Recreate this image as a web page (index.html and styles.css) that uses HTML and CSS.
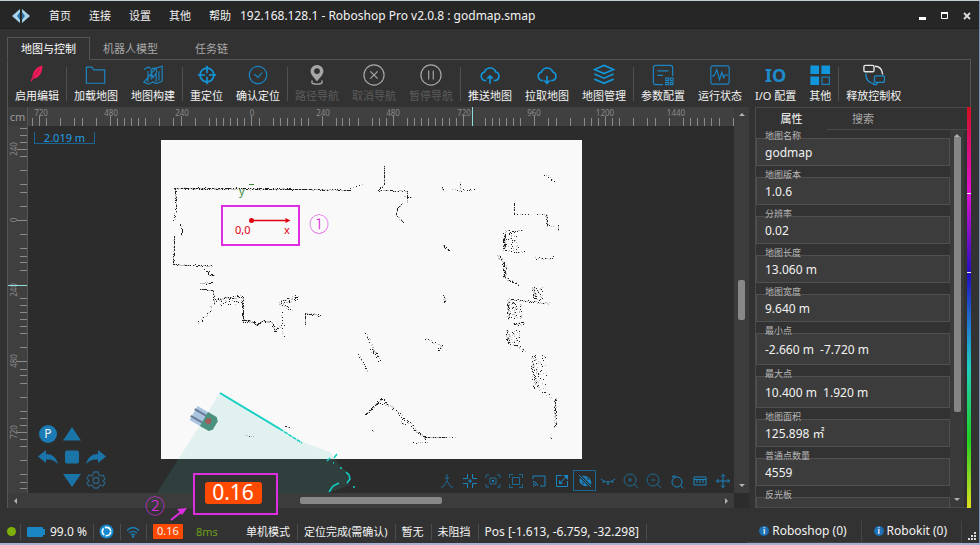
FILE: index.html
```html
<!DOCTYPE html>
<html lang="zh-CN">
<head>
<meta charset="utf-8">
<title>Roboshop Pro</title>
<link rel="stylesheet" href="styles.css">
</head>
<body>
<header class="titlebar">
  <svg class="logo" viewBox="0 0 18 14"><path d="M8 0v14L0 7z" fill="#a9d3ea"/><path d="M10 0v14l8-7z" fill="#a9d3ea"/><path d="M8 3v8L5 7zM10 3v8l3-4z" fill="#2b6f9c"/></svg>
  <nav class="menu">
    <button>首页</button><button>连接</button><button>设置</button><button>其他</button><button>帮助</button>
  </nav>
  <h1 class="title">192.168.128.1 - Roboshop Pro v2.0.8 : godmap.smap</h1>
  <div class="winbtns">
    <button aria-label="Minimize"><svg viewBox="0 0 8 8"><path d="M0 5h7v3H0z" fill="#fff"/></svg></button>
    <button aria-label="Maximize"><svg viewBox="0 0 8 8"><path d="M.5 1.5h6v5h-6z" fill="none" stroke="#fff"/><path d="M0 0h7v2H0z" fill="#fff"/></svg></button>
    <button aria-label="Close"><svg viewBox="0 0 8 8"><path d="M1 1l6 6M7 1L1 7" stroke="#ddd" stroke-width="1.8"/></svg></button>
  </div>
</header>

<main class="main">
  <div class="tabs">
    <button class="tab active">地图与控制</button>
    <button class="tab">机器人模型</button>
    <button class="tab">任务链</button>
  </div>
  <div class="page">
    <div class="toolbar">
      <div class="group">
        <button class="tool"><svg viewBox="0 0 24 24"><path d="M18 1.500C11 3 7.500 8 7 14L5 18.500l1 .5 2-3c6-1 10-6 10-14.500z" fill="#ee1c5c"/><path d="M15 5L7 16" stroke="#a3113f" stroke-width=".8"/></svg>启用编辑</button>
      </div>
      <div class="group">
        <button class="tool"><svg viewBox="0 0 24 24" class="ln"><path d="M1.500 3.500h6l2 3h12v14.500h-20z"/></svg>加载地图</button>
        <button class="tool"><svg viewBox="0 0 24 24" class="ln"><path d="M2 6l4.500-2.500 3 1M15 4.500L22 2.500v16l-6 3-4-2-5 2.500-5-2zM6.500 7.500v12M10 6v11M15.500 11v9M18.500 8v10M10 9c0-6 6-6 6 0l-4 6z"/></svg>地图构建</button>
      </div>
      <div class="group">
        <button class="tool"><svg viewBox="0 0 24 24" class="ln bold"><circle cx="12" cy="12" r="7.500"/><path d="M12 2v8M12 14v8M2 12h8M14 12h8"/></svg>重定位</button>
        <button class="tool"><svg viewBox="0 0 24 24" class="ln"><circle cx="12" cy="12" r="9.500"/><path d="M8 11l4 3.500 4.500-5"/></svg>确认定位</button>
      </div>
      <div class="group">
        <button class="tool" disabled><svg viewBox="0 0 24 24"><path fill-rule="evenodd" d="M12 1a7 7 0 0 1 7 7c0 4-4 7-7 11C9 15 5 12 5 8a7 7 0 0 1 7-7zm0 3.500a3.200 3.200 0 1 0 0 6.400 3.200 3.200 0 0 0 0-6.400z" fill="#a6a6a6"/><path d="M7 18c-2 3 1 4 5 4s7-1 5-4" fill="none" stroke="#a6a6a6" stroke-width="1.500"/></svg>路径导航</button>
        <button class="tool" disabled><svg viewBox="0 0 24 24" class="ln"><circle cx="12" cy="12" r="11"/><path d="M8 8l8 8M16 8l-8 8"/></svg>取消导航</button>
        <button class="tool" disabled><svg viewBox="0 0 24 24" class="ln"><circle cx="12" cy="12" r="11"/><path d="M9.500 7v10M14.500 7v10"/></svg>暂停导航</button>
      </div>
      <div class="group">
        <button class="tool"><svg viewBox="0 0 24 24" class="ln bold"><path d="M8 18H6.500a4.700 4.700 0 0 1-.500-9.200 6.500 6.500 0 0 1 12.300 0A4.700 4.700 0 0 1 17.500 18H16M12 21.500v-8M9 16l3-3 3 3"/></svg>推送地图</button>
        <button class="tool"><svg viewBox="0 0 24 24" class="ln bold"><path d="M8 18H6.500a4.700 4.700 0 0 1-.500-9.200 6.500 6.500 0 0 1 12.300 0A4.700 4.700 0 0 1 17.500 18H16M12 13v8M9 18l3 3 3-3"/></svg>拉取地图</button>
        <button class="tool"><svg viewBox="0 0 24 24" class="ln bold"><path d="M12 1.500l10.500 4.500L12 10.500 1.500 6zM1.500 11L12 15.500 22.500 11M1.500 16.500L12 21l10.500-4.500"/></svg>地图管理</button>
      </div>
      <div class="group">
        <button class="tool"><svg viewBox="0 0 24 24" class="ln"><path d="M12 22.500H4a2.500 2.500 0 0 1-2.500-2.500V4A2.500 2.500 0 0 1 4 1.500h16A2.500 2.500 0 0 1 22.500 4v9M6 7.500h12M6 12.500h6M15 15.500h3v2.500h-3zM20 15.500h3v2.500h-3zM15 20h3v2.500h-3zM20 20h3v2.500h-3z"/></svg>参数配置</button>
        <button class="tool"><svg viewBox="0 0 24 24" class="ln"><rect x="2" y="2" width="20" height="20" rx="2"/><path d="M3 13h2.500L8.500 6l3 11L14 9l2 6 1.500-3H21"/></svg>运行状态</button>
        <button class="tool"><span class="io">IO</span>I/O 配置</button>
        <button class="tool"><svg viewBox="0 0 24 24"><path d="M1.500 1.500H11V11H1.500zM13.500 1.500H23V11h-9.500zM1.500 13.500H11V23H1.500z" fill="#1296db"/><path d="M14.200 14.200h8v8h-8z" fill="none" stroke="#1b7fb5" stroke-width="1.400"/></svg>其他</button>
      </div>
      <div class="group">
        <button class="tool"><svg viewBox="0 0 24 24" fill="none" stroke-width="1.500"><rect x="1" y="1.500" width="11" height="7" rx="1.500" stroke="#e6e6e6"/><path d="M13 2.500c6 0 8 4 8.500 9" stroke="#e6e6e6"/><rect x="12.500" y="13" width="11" height="7" rx="1.500" stroke="#1b8cc8"/><path d="M3 10c0 8 4 11 9.500 11.500M16 20.500l-1.500 2H11" stroke="#1b8cc8"/></svg>释放控制权</button>
      </div>
    </div>

    <div class="workspace">
      <section class="mapview">
        <div class="unit">cm</div>
        <svg class="ruler-x" viewBox="28 107 706 19" preserveAspectRatio="xMinYMin slice">
          <path class="ticks" id="ticks-x"/>
          <g class="nums" text-anchor="middle"><text x="41" y="116">720</text><text x="111" y="116">480</text><text x="182" y="116">240</text><text x="252" y="116">0</text><text x="323" y="116">240</text><text x="393" y="116">480</text><text x="464" y="116">720</text><text x="534" y="116">960</text><text x="605" y="116">1200</text><text x="676" y="116">1440</text></g>
          <path class="cursor" d="M472.500 107v19"/>
        </svg>
        <svg class="ruler-y" viewBox="8 126 20 367" preserveAspectRatio="xMinYMin slice">
          <path class="ticks" id="ticks-y"/>
          <g class="nums" text-anchor="middle"><text transform="translate(17 149) rotate(-90)">240</text><text transform="translate(17 220) rotate(-90)">0</text><text transform="translate(17 290) rotate(-90)">240</text><text transform="translate(17 361) rotate(-90)">480</text><text transform="translate(17 432) rotate(-90)">720</text></g>
          <path class="cursor" d="M8 285.500h20"/>
        </svg>
        <div class="canvas">
          <svg class="map" viewBox="28 126 706 367" preserveAspectRatio="xMinYMin slice">
            <path d="M161 140h421v319H161z" fill="#f9f9f9"/>
            <path id="cloud" fill="#222"/>
            <path d="M220 393l82 49 28 10 10 14 9 7v12l-20 8H157z" fill="#3cbeb4" fill-opacity=".13"/>
            <path d="M220 393l60 36" stroke="#12cfc4" stroke-width="2"/>
            <path d="M280 429l22 14" stroke="#12cfc4" stroke-width="1.500" stroke-dasharray="4 1"/>
            <path d="M327 461l3-3M334 458l3-4M333 463h1M340 468h2M346 472l3 3 1 4-3 4M329 492l4-6 6-3M353 487h2" fill="none" stroke="#12cfc4" stroke-width="1.500"/>
            <g transform="translate(204 419) rotate(30)">
              <path d="M-12-8H3V8h-15z" fill="#a9c4e0"/><path d="M-13-4H3M-13 4H3" stroke="#6b7d94" stroke-width="2"/><path d="M0-8h10l3 3V5l-3 3H0z" fill="#4b9180"/><path d="M2-2l4-2 2 4-2 3-4-1z" fill="#a65b5b"/>
            </g>
            <path d="M251 220.500h36" stroke="#e00010" stroke-width="1.300"/><circle cx="251.500" cy="220.500" r="2.500" fill="#e00010"/><path d="M285.500 218l5 2.500-5 2.500z" fill="#e00010"/>
            <path d="M249 184.500h5" stroke="#3a8a3a"/>
            <g class="axis"><text x="235" y="234" fill="#e00010">0,0</text><text x="284" y="234" fill="#e00010">x</text><text x="239" y="195" fill="#3a8a3a">y</text></g>
            <path d="M222 206h77v39h-77z" fill="none" stroke="#dd2fe0" stroke-width="2"/>
            <text class="mark" x="309" y="232">①</text>
          </svg>
          <div class="scale">2.019 m</div>
          <div class="jog">
            <button aria-label="Park" class="p"><svg viewBox="0 0 20 20"><circle cx="10" cy="10" r="9" fill="#1a7bb5"/></svg><span>P</span></button>
            <button aria-label="Forward"><svg viewBox="0 0 20 20"><path d="M10 3l9 13.500H1z"/></svg></button><i></i>
            <button aria-label="Turn left"><svg viewBox="0 0 20 20"><path d="M0 9.500L8 3v4c6 0 10 3 12 10-4-4-7-5-12-4.500V16z"/></svg></button>
            <button aria-label="Stop"><svg viewBox="0 0 20 20"><rect x="3" y="3.500" width="14" height="13" rx="2"/></svg></button>
            <button aria-label="Turn right"><svg viewBox="0 0 20 20"><path d="M20 9.500L12 3v4c-6 0-10 3-12 10 4-4 7-5 12-4.500V16z"/></svg></button>
            <i></i><button aria-label="Backward"><svg viewBox="0 0 20 20"><path d="M10 17L19 4H1z"/></svg></button>
            <button aria-label="Settings"><svg viewBox="0 0 20 20"><path d="M8 2h4l1 3 2 1 2-1 2 4-2 2 2 2-2 3-3-1-2 3H8l-2-3-3 1-2-3 2-2-2-3 2-3 3 1z" fill="none" stroke="#2b6180" stroke-width="1.300"/><circle cx="10" cy="10.500" r="3" fill="none" stroke="#2b6180" stroke-width="1.300"/></svg></button>
          </div>
          <div class="viewtools">
            <button aria-label="Axes"><svg viewBox="0 0 16 16" class="dim"><path d="M8 1v7M8 8l-4 6M8 8l4 6M6 5h4M2 14h2M12 14h2"/></svg></button>
            <button aria-label="Collapse"><svg viewBox="0 0 16 16"><path d="M5.500 1v4.500H1M10.500 1v4.500H15M5.500 15v-4.500H1M10.500 15v-4.500H15M8 6v4M6 8h4"/></svg></button>
            <button aria-label="Focus robot"><svg viewBox="0 0 16 16" class="dim"><path d="M1 5V2h3M12 2h3v3M15 11v3h-3M4 14H1v-3M5 5h6v6H5z"/><path d="M7 7h2v2H7z" class="fl"/></svg></button>
            <button aria-label="Fit"><svg viewBox="0 0 16 16" class="dim"><path d="M1.500 5V1.500H5M11 1.500h3.500V5M14.500 11v3.500H11M5 14.500H1.500V11M4.500 4.500h7v7h-7z"/></svg></button>
            <button aria-label="Cast"><svg viewBox="0 0 16 16"><path d="M2 6V3h12v10H9M2 8.500A4.500 4.500 0 0 1 6.500 13M2 10.500A2.500 2.500 0 0 1 4.500 13M2 13h1"/></svg></button>
            <button aria-label="Open"><svg viewBox="0 0 16 16"><path d="M8 2.500H2.500v11h11V8M6 10l7-7"/><path d="M9 2h5v5zM5 7v4h4z" class="fl"/></svg></button>
            <button aria-label="Hide laser" class="on"><svg viewBox="0 0 16 16"><path d="M5 3l9 9c2-5-4-10-9-9zM3 5c-2 4 2 9 8 8z" class="fl"/><path d="M7 4.500l1 1M10 5l2 2M5 9l2 2" stroke="#2c2c2c"/><path d="M2 2l12 12"/></svg></button>
            <button aria-label="Hide"><svg viewBox="0 0 16 16"><path d="M1 6c4 4 10 4 14 0M4 8L3 10M8 9v3M12 8l1 2"/></svg></button>
            <button aria-label="Zoom in"><svg viewBox="0 0 16 16" class="dim"><circle cx="7" cy="7" r="6"/><path d="M11 11l4 4M7 5v4M5 7h4"/></svg></button>
            <button aria-label="Zoom out"><svg viewBox="0 0 16 16" class="dim"><circle cx="7" cy="7" r="6"/><path d="M11 11l4 4M5 7h4"/></svg></button>
            <button aria-label="Reset zoom"><svg viewBox="0 0 16 16"><circle cx="8" cy="9" r="5"/><path d="M11.500 12.500l3 3M3 3l2 2M4 3h3"/></svg></button>
            <button aria-label="Measure"><svg viewBox="0 0 16 16"><path d="M2 4h12v8H2zM2 6.500h12M5 7v3M8 7v3M11 7v3"/></svg></button>
            <button aria-label="Pan"><svg viewBox="0 0 16 16"><path d="M8 1.500v13M1.500 8h13M6 3.500l2-2 2 2M6 12.500l2 2 2-2M3.500 6l-2 2 2 2M12.500 6l2 2-2 2"/></svg></button>
          </div>
        </div>
        <div class="hscroll"><i class="arrow left"></i><b></b><i class="arrow right"></i></div>
        <div class="vscroll"><i class="arrow up"></i><b></b><i class="arrow down"></i></div>
        <svg class="callout" viewBox="145 470 135 54">
          <path d="M194 474h83v40h-83z" fill="#323434" stroke="#dd2fe0" stroke-width="2"/>
          <rect x="205" y="482" width="57" height="22" rx="3" fill="#ff4a00"/>
          <text x="233" y="500" class="big" text-anchor="middle">0.16</text>
          <text class="mark" x="145" y="514">②</text>
          <path d="M171 520l10-8" stroke="#dd2fe0" stroke-width="2"/><path d="M187 508l-10 1 5 6z" fill="#dd2fe0"/>
        </svg>
      </section>

      <aside class="props">
        <div class="ptabs"><button class="active">属性</button><button>搜索</button></div>
        <div class="pbody">
          <form class="fields">
            <div class="field"><label for="f1">地图名称</label><input id="f1" value="godmap" readonly></div>
            <div class="field"><label for="f2">地图版本</label><input id="f2" value="1.0.6" readonly></div>
            <div class="field"><label for="f3">分辨率</label><input id="f3" value="0.02" readonly></div>
            <div class="field"><label for="f4">地图长度</label><input id="f4" value="13.060 m" readonly></div>
            <div class="field"><label for="f5">地图宽度</label><input id="f5" value="9.640 m" readonly></div>
            <div class="field tall"><label for="f6">最小点</label><input id="f6" value="-2.660 m  -7.720 m" readonly></div>
            <div class="field tall"><label for="f7">最大点</label><input id="f7" value="10.400 m  1.920 m" readonly></div>
            <div class="field"><label for="f8">地图面积</label><input id="f8" value="125.898 ㎡" readonly></div>
            <div class="field"><label for="f9">普通点数量</label><input id="f9" value="4559" readonly></div>
            <div class="field"><label for="f10">反光板</label><input id="f10" value="" readonly></div>
          </form>
          <div class="pscroll"><i class="arrow up"></i><b></b><i class="arrow down"></i></div>
        </div>
      </aside>
      <div class="spectrum"><i></i><i></i></div>
    </div>
  </div>
</main>

<footer class="status">
  <span class="cell"><i class="dot"></i></span>
  <span class="cell power"><svg class="batt" viewBox="0 0 18 10"><rect width="16" height="10" rx="1" fill="#1a86c4"/><path d="M16 2h2v6h-2z" fill="#1a86c4"/></svg>99.0 %</span>
  <span class="cell sync"><svg viewBox="0 0 16 16"><circle cx="8" cy="8" r="7.500" fill="#1488cf"/><circle cx="8" cy="8" r="4.500" fill="none" stroke="#fff" stroke-width="1.800" stroke-dasharray="8 1.400"/></svg></span>
  <span class="cell wifi"><svg viewBox="0 0 14 12" fill="none" stroke="#1b7fb5" stroke-width="1.300"><path d="M1 4.500c4-4 8-4 12 0M3 7c3-2.500 5-2.500 8 0M5 9c1.500-1.200 2.500-1.200 4 0"/><circle cx="7" cy="10.500" r=".6"/></svg></span>
  <span class="cell text"><b class="badge">0.16</b><span class="ping">8ms</span><span>单机模式</span></span>
  <span class="cell text">定位完成(需确认)</span>
  <span class="cell text">暂无</span>
  <span class="cell text">未阻挡</span>
  <span class="cell text pos">Pos [-1.613, -6.759, -32.298]</span>
  <span class="spacer"></span>
  <button class="log"><i>i</i>Roboshop (0)</button>
  <button class="log"><i>i</i>Robokit (0)</button>
  <svg class="grip" viewBox="0 0 9 9"><path d="M6 0h2v2H6zM3 3h2v2H3zM6 3h2v2H6zM0 6h2v2H0zM3 6h2v2H3zM6 6h2v2H6z" fill="#ddd"/></svg>
</footer>
<script src="map.js"></script>
</body>
</html>
```
FILE: styles.css
```css
* { box-sizing: border-box; }
body {
  margin: 0;
  min-height: 100vh;
  display: flex;
  flex-direction: column;
  background: #323232;
  color: #f2f2f2;
  font: 12px/16px "Noto Sans", "Noto Sans CJK SC", sans-serif;
  border-top: 1px solid #c3ced2;
  border-right: 1px solid #7f95b3;
  border-bottom: 2px solid #a9afd0;
}
button {
  padding: 0;
  border: 0;
  background: none;
  color: inherit;
  font: inherit;
}
svg { display: block; }

.titlebar {
  display: flex;
  align-items: center;
  height: 28px;
  padding: 2px 8px 0 12px;
  background: #262626;
  border-bottom: 1px solid #1d1d1d;
}
.logo { width: 18px; height: 14px; }
.menu {
  display: flex;
  gap: 18px;
  margin-left: 19px;
  font-size: 11px;
}
.title {
  flex: 1;
  margin: 0 0 0 9px;
  font-size: 12px;
  font-weight: 400;
}
.winbtns { display: flex; gap: 14px; }
.winbtns svg { width: 8px; height: 8px; }

.main {
  flex: 1;
  display: flex;
  flex-direction: column;
  min-height: 0;
  padding: 8px 8px 0 7px;
}
.tabs {
  display: flex;
  height: 23px;
  position: relative;
  z-index: 1;
  margin-bottom: -1px;
}
.tab {
  padding: 0 13px;
  color: #a8a8a8;
  font-size: 11px;
}
.tab + .tab + .tab { padding-left: 24px; }
.tab.active {
  border: 1px solid #555;
  border-bottom-color: #323232;
  background: #323232;
  color: #fff;
}
.page {
  flex: 1;
  display: flex;
  flex-direction: column;
  min-height: 0;
  border: 1px solid #555;
  border-width: 1px 1px 0;
}
.toolbar { display: flex; height: 47px; padding: 4px 7px 0; }
.group { display: flex; gap: 13px; position: relative; }
.group + .group { margin-left: 7px; padding-left: 8px; }
.group + .group::before {
  content: "";
  position: absolute;
  left: 0;
  top: 3px;
  width: 1px;
  height: 34px;
  background: #505050;
}
.tool {
  display: flex;
  flex-direction: column;
  align-items: center;
  font-size: 11px;
  line-height: 16px;
  white-space: nowrap;
}
.tool svg { width: 22px; height: 22px; margin-bottom: 2px; }
.tool .ln { fill: none; stroke: #1b85c2; stroke-width: 1.300; }
.tool .bold { stroke: #1296db; stroke-width: 1.800; }
.tool:disabled { color: #5c5c5c; }
.tool:disabled .ln { stroke: #a6a6a6; }
.io {
  height: 24px;
  color: #1d8bcb;
  font: 700 18px/23px "Noto Sans", sans-serif;
}

.workspace { flex: 1; display: flex; min-height: 0; }
.mapview {
  flex: 1;
  position: relative;
  display: grid;
  grid-template: 19px minmax(0, 1fr) 15px / 20px minmax(0, 1fr) 15px;
  min-width: 0;
  background: #2c2c2c;
}
.unit {
  background: #3c3c3c;
  border-right: 1px solid #555;
  color: #9a9a9a;
  font-size: 11px;
  line-height: 20px;
  text-align: center;
}
.ruler-x, .ruler-y { width: 100%; height: 100%; background: #404040; }
.ruler-y { border-right: 1px solid #555; }
.ticks { stroke: #8a8a8a; fill: none; }
.nums { fill: #8a8a8a; font-size: 8px; }
.cursor { stroke: #8fdcda; }
.vscroll {
  grid-area: 1 / 3 / 3 / 4;
  display: flex;
  flex-direction: column;
  align-items: center;
  justify-content: space-between;
  padding: 6px 0;
  background: #3c3c3c;
}
.vscroll b { width: 7px; height: 40px; border-radius: 2px; background: #888; }
.hscroll {
  grid-area: 3 / 1 / 4 / 3;
  display: flex;
  align-items: center;
  justify-content: space-between;
  padding: 0 6px;
  background: #3c3c3c;
}
.hscroll b { width: 20%; height: 7px; border-radius: 2px; background: #888; }
.arrow { border: 3px solid transparent; }
.arrow.up { border-bottom-color: #b0b0b0; border-top: 0; }
.arrow.down { border-top-color: #b0b0b0; border-bottom: 0; }
.arrow.left { border-right-color: #b0b0b0; border-left: 0; }
.arrow.right { border-left-color: #b0b0b0; border-right: 0; }

.canvas { grid-area: 2 / 2; position: relative; min-height: 0; overflow: hidden; }
.map { position: absolute; width: 100%; height: 100%; }
.axis { font-size: 11px; }
.mark { font: 300 20px "Noto Sans CJK SC", sans-serif; fill: #dd2fe0; }
.scale {
  position: absolute;
  left: 6px;
  top: 6px;
  width: 61px;
  height: 12px;
  border: 1px solid #1b6690;
  border-top: 0;
  color: #1f9fe5;
  font-size: 11px;
  line-height: 11px;
  text-align: center;
}
.jog {
  position: absolute;
  left: 8px;
  bottom: 2px;
  display: grid;
  grid-template-columns: repeat(3, 24px);
  grid-auto-rows: 23px;
  place-items: center;
}
.jog svg { width: 20px; height: 20px; fill: #1a74a8; }
.jog .p { display: grid; place-items: center; }
.jog .p > * { grid-area: 1 / 1; }
.viewtools { position: absolute; right: 0; bottom: 2px; display: flex; }
.viewtools button {
  display: grid;
  place-items: center;
  width: 23px;
  height: 21px;
  border: 1px solid transparent;
}
.viewtools .on { border-color: #1b6690; }
.viewtools svg { width: 16px; height: 16px; fill: none; stroke: #1b85c2; }
.viewtools .dim { stroke: #1f6a94; }
.viewtools .fl { fill: #1b85c2; stroke: none; }
.callout { position: absolute; left: 137px; bottom: -16px; width: 135px; height: 54px; }
.big { font-size: 21px; fill: #fff; }

.props {
  width: 212px;
  display: flex;
  flex-direction: column;
  min-height: 0;
  margin-left: 6px;
  border: 1px solid #4a4a4a;
  border-right: 0;
}
.ptabs { display: flex; height: 22px; font-size: 11px; color: #a8a8a8; }
.ptabs button { width: 71px; }
.ptabs button + button { flex: 1; padding-right: 68px; border-bottom: 1px solid #4a4a4a; }
.ptabs .active { color: #fff; }
.pbody { flex: 1; display: flex; min-height: 0; overflow: hidden; }
.fields {
  flex: 1;
  height: 0;
  display: flex;
  flex-direction: column;
  gap: 11px;
  padding-top: 8px;
}
.field { position: relative; flex: none; height: 28px; }
.field.tall { height: 32px; }
.field label {
  position: absolute;
  left: 9px;
  top: -8px;
  color: #b8b8b8;
  font-size: 9px;
  line-height: 12px;
}
.field input {
  width: 100%;
  height: 100%;
  padding: 0 8px;
  border: 1px solid #505050;
  background: #3c3c3c;
  color: #f2f2f2;
  font: inherit;
  white-space: pre;
}
.pscroll {
  width: 14px;
  margin-right: 3px;
  display: flex;
  flex-direction: column;
  align-items: center;
  padding: 4px 0 6px;
  background: #3a3a3a;
}
.pscroll b { flex: 3; width: 7px; background: #858585; border-radius: 0 0 2px 2px; }
.pscroll .down { margin-top: 86px; }
.spectrum {
  width: 4px;
  margin-right: -1px;
  background: linear-gradient(#d01020, #e010d0 21%, #2010c0 42%, #2080d0 55%, #20d0c0 65%, #20d020 83%, #e0e020);
}
.spectrum i { display: block; height: 87px; border-bottom: 1px solid #eee; }
.spectrum i + i { height: 79px; }

.status {
  display: flex;
  align-items: center;
  height: 35px;
  padding: 12px 2px 0 7px;
}
.cell {
  display: flex;
  align-items: center;
  height: 16px;
  padding: 0 6px 0 5px;
  border-right: 1px solid #4c4c4c;
  font-size: 11px;
  white-space: nowrap;
}
.cell.text { padding: 0 7px 0 6px; }
.cell:first-child { padding-left: 0; padding-right: 4px; }
.cell.power, .cell.pos { font-size: 12px; }
.dot { width: 9px; height: 9px; border-radius: 50%; background: #7fb00a; }
.batt { width: 18px; height: 10px; margin: 0 5px 0 1px; }
.cell.sync svg { width: 15px; height: 15px; }
.cell.wifi svg { width: 14px; height: 12px; }
.badge {
  width: 30px;
  height: 15px;
  border-radius: 1px;
  background: #ff4a00;
  font-weight: 400;
  line-height: 14px;
  text-align: center;
}
.ping { width: 63px; padding-left: 13px; color: #6f9f1c; }
.spacer { flex: 1; }
.log {
  display: flex;
  align-items: center;
  gap: 3px;
  height: 22px;
  padding: 0 14px 0 12px;
  border: solid #454545;
  border-width: 0 1px 1px 0;
}
.log i {
  width: 10px;
  height: 10px;
  border-radius: 50%;
  background: #1b6fb5;
  font: 700 8px/10px "Noto Sans", sans-serif;
}
.grip { width: 9px; height: 9px; align-self: flex-end; margin: 0 0 2px 6px; }
```
FILE: map.js
```js
// Ruler graduations, in canvas coordinates
const ticksX = [32, 39, 46, 60, 74, 82, 96, 110, 117, 124, 131, 138, 145, 159, 173, 181, 195, 209, 216, 223, 230, 237, 244, 251, 259, 273, 280, 287, 294, 301, 308, 322, 336, 342, 349, 358, 372, 379, 386, 393, 407, 414, 421, 428, 435, 442, 449, 456, 463, 485, 492, 499, 506, 513, 520, 534, 548, 556, 570, 584, 591, 598, 605, 612, 619, 633, 647, 655, 669, 683, 690, 697, 704, 711, 719, 733];
const majorX = [39, 110, 181, 251, 322, 393, 463, 534, 605];
const ticksY = [128, 135, 142, 149, 156, 170, 184, 192, 206, 220, 234, 248, 256, 262, 270, 298, 305, 312, 319, 326, 333, 347, 361, 369, 375, 383, 397, 411, 418, 425, 432, 439, 446, 460, 474, 482, 488];
const majorY = [149, 220, 361, 432];
document.getElementById('ticks-x').setAttribute('d',
  ticksX.map(x => `M${x + 0.5} ${majorX.includes(x) ? 116 : 118}V126`).join(''));
document.getElementById('ticks-y').setAttribute('d',
  ticksY.map(y => `M${majorY.includes(y) ? 17 : 20} ${y + 0.5}H28`).join(''));

// Scan segments: x1, y1, x2, y2, number of points, spread in x, spread in y
const segments = [
  [174,188,300,189,190,0,1],[174,188,300,189,90,0,2],[300,189,349,190,60,0,1],[350,188,362,184,5,0,0],
  [175,188,176,208,30,1,0],[176,208,174,220,10,2,0],[180,224,182,230,6,0,0],[182,230,181,235,8,0,0],
  [174,236,173,264,45,1,0],[173,264,190,265,22,0,1],[193,265,212,266,22,0,2],
  [205,270,213,276,18,3,3],[200,284,212,282,14,0,2],[200,289,213,290,16,0,0],[213,290,214,304,20,1,0],
  [215,300,240,296,45,0,3],[220,304,238,300,18,2,6],[242,296,243,320,55,2,0],[243,321,254,321,25,0,3],
  [254,322,256,325,8,1,1],[256,325,262,321,12,0,1],[262,321,272,322,20,0,2],[272,323,275,331,12,2,1],
  [275,330,280,326,10,2,2],[198,323,213,306,16,4,2],[279,302,298,297,45,2,6],[284,304,290,310,12,5,3],
  [282,312,283,336,10,3,0],[305,324,305,313,12,0,0],[305,313,320,315,20,0,2],
  [384,166,384,184,28,1,0],[384,184,378,190,8,1,0],[378,190,407,191,26,0,1],[407,191,407,202,10,1,0],
  [404,196,411,197,6,0,0],[402,203,397,208,9,0,0],[397,208,396,214,9,0,0],[396,214,403,222,12,1,1],
  [442,187,443,190,5,1,1],[453,190,474,190,12,2,2],[460,182,460,190,6,1,0],[545,175,553,180,9,2,4],
  [514,203,514,214,10,1,0],[514,214,528,214,6,0,1],[537,214,546,214,5,0,0],[546,214,547,226,22,2,0],
  [547,225,553,226,4,0,0],[558,225,558,230,6,0,0],[505,231,522,231,14,0,2],[504,232,504,248,50,3,0],
  [511,233,512,249,30,12,2],[503,250,524,252,14,0,2],[498,256,502,261,16,3,4],[504,262,505,277,55,4,0],
  [505,278,518,284,20,1,2],[535,258,553,257,14,0,3],[443,245,449,250,12,2,2],[444,295,444,302,11,2,0],
  [533,287,534,298,30,3,0],[539,287,539,300,22,7,0],[508,299,549,303,42,0,2],[508,300,508,319,38,3,0],
  [514,302,515,318,46,13,0],[513,324,524,323,20,0,3],[507,330,508,343,30,3,0],[513,330,516,343,24,12,0],
  [510,343,525,350,20,3,3],[533,355,536,388,62,6,0],[540,355,542,390,32,10,0],[540,390,551,397,8,2,2],
  [555,398,555,427,50,2,0],[550,437,551,438,2,0,0],[366,332,379,361,28,3,3],[371,348,376,354,16,4,3],
  [358,355,367,370,14,3,3],[425,338,440,345,11,2,2],[438,350,442,345,12,2,2],[365,415,382,398,50,2,2],
  [382,398,424,437,52,4,2],[380,402,390,406,10,3,2],[416,431,426,438,14,2,2],[424,437,445,437,30,0,1],
  [446,437,455,437,4,0,0],[414,443,427,441,7,2,2],[400,422,404,424,5,3,2],[372,430,373,431,2,0,0],
  [245,435,253,436,5,0,1],[285,426,289,427,4,1,1],[345,190,350,190,3,0,0]
];
let seed = 7;
const rand = () => (seed = (seed * 16807) % 2147483647) / 2147483647;
let d = '';
for (const [x1, y1, x2, y2, n, sx, sy] of segments) {
  for (let i = 0; i < n; i++) {
    const t = n > 1 ? i / (n - 1) : 0;
    const x = Math.round(x1 + (x2 - x1) * t + (rand() - 0.5) * sx);
    const y = Math.round(y1 + (y2 - y1) * t + (rand() - 0.5) * sy);
    // Points at two sizes give the scan its uneven grain
    const s = rand() < 0.5 ? 1 : 0.6;
    d += `M${x} ${y}h${s}v${s}h-${s}z`;
  }
}
document.getElementById('cloud').setAttribute('d', d);
```
